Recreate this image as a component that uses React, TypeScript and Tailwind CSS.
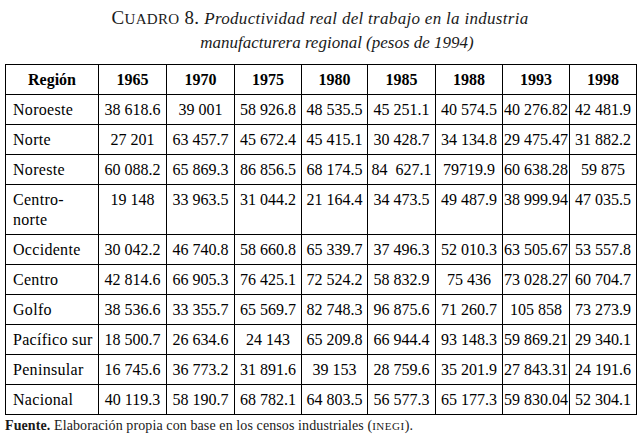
import React from "react";

const years = ["1965", "1970", "1975", "1980", "1985", "1988", "1993", "1998"];

const rows: { label: string[]; values: string[]; tall?: boolean }[] = [
  { label: ["Noroeste"], values: ["38 618.6", "39 001", "58 926.8", "48 535.5", "45 251.1", "40 574.5", "40 276.82", "42 481.9"] },
  { label: ["Norte"], values: ["27 201", "63 457.7", "45 672.4", "45 415.1", "30 428.7", "34 134.8", "29 475.47", "31 882.2"] },
  { label: ["Noreste"], values: ["60 088.2", "65 869.3", "86 856.5", "68 174.5", "84  627.1", "79719.9", "60 638.28", "59 875"] },
  { label: ["Centro-", "norte"], values: ["19 148", "33 963.5", "31 044.2", "21 164.4", "34 473.5", "49 487.9", "38 999.94", "47 035.5"], tall: true },
  { label: ["Occidente"], values: ["30 042.2", "46 740.8", "58 660.8", "65 339.7", "37 496.3", "52 010.3", "63 505.67", "53 557.8"] },
  { label: ["Centro"], values: ["42 814.6", "66 905.3", "76 425.1", "72 524.2", "58 832.9", "75 436", "73 028.27", "60 704.7"] },
  { label: ["Golfo"], values: ["38 536.6", "33 355.7", "65 569.7", "82 748.3", "96 875.6", "71 260.7", "105 858", "73 273.9"] },
  { label: ["Pacífico sur"], values: ["18 500.7", "26 634.6", "24 143", "65 209.8", "66 944.4", "93 148.3", "59 869.21", "29 340.1"] },
  { label: ["Peninsular"], values: ["16 745.6", "36 773.2", "31 891.6", "39 153", "28 759.6", "35 201.9", "27 843.31", "24 191.6"] },
  { label: ["Nacional"], values: ["40 119.3", "58 190.7", "68 782.1", "64 803.5", "56 577.3", "65 177.3", "59 830.04", "52 304.1"] },
];

export default function App() {
  return (
    <div className="w-[640px] h-[436px] bg-white text-black overflow-hidden font-['Liberation_Serif','Times_New_Roman',serif]">
      <div className="h-[64px] flex flex-col items-center pt-[6px] text-[17px] leading-[23px] text-[#1a1a1a]">
        <div>
          <span className="not-italic text-[19px] tracking-[0.3px]">C<span className="text-[15px]">UADRO</span> 8. </span>
          <span className="italic tracking-[0.3px]">Productividad real del trabajo en la industria</span>
        </div>
        <div className="italic pl-[34px]">manufacturera regional (pesos de 1994)</div>
      </div>
      <div className="ml-[5px] w-[632px] border-l border-t border-black grid grid-cols-[93px_68px_68px_67px_66px_68px_67px_67px_67px] text-[16px] leading-[20px]">
        <div className="h-[30px] border-r border-b border-black flex justify-center pt-[5px] font-bold">Región</div>
        {years.map((y) => (
          <div key={y} className="h-[30px] border-r border-b border-black flex justify-center pt-[5px] font-bold">{y}</div>
        ))}
        {rows.map((r) => (
          <React.Fragment key={r.label.join("")}>
            <div className={`${r.tall ? "h-[50px]" : "h-[30px]"} border-r border-b border-black pl-[7px] pt-[5px] flex flex-col tracking-[0.3px]`}>
              {r.label.map((l) => (
                <span key={l}>{l}</span>
              ))}
            </div>
            {r.values.map((v, i) => (
              <div key={i} className={`${r.tall ? "h-[50px]" : "h-[30px]"} border-r border-b border-black flex justify-center pt-[5px] whitespace-pre`}>{v}</div>
            ))}
          </React.Fragment>
        ))}
      </div>
      <div className="pl-[5px] pt-[2px] text-[14px] leading-[18px] tracking-[0.1px] text-[#1a1a1a]">
        <span className="font-bold">Fuente.</span> Elaboración propia con base en los censos industriales (<span className="text-[11px] tracking-[0.5px]">INEGI</span>).
      </div>
    </div>
  );
}
